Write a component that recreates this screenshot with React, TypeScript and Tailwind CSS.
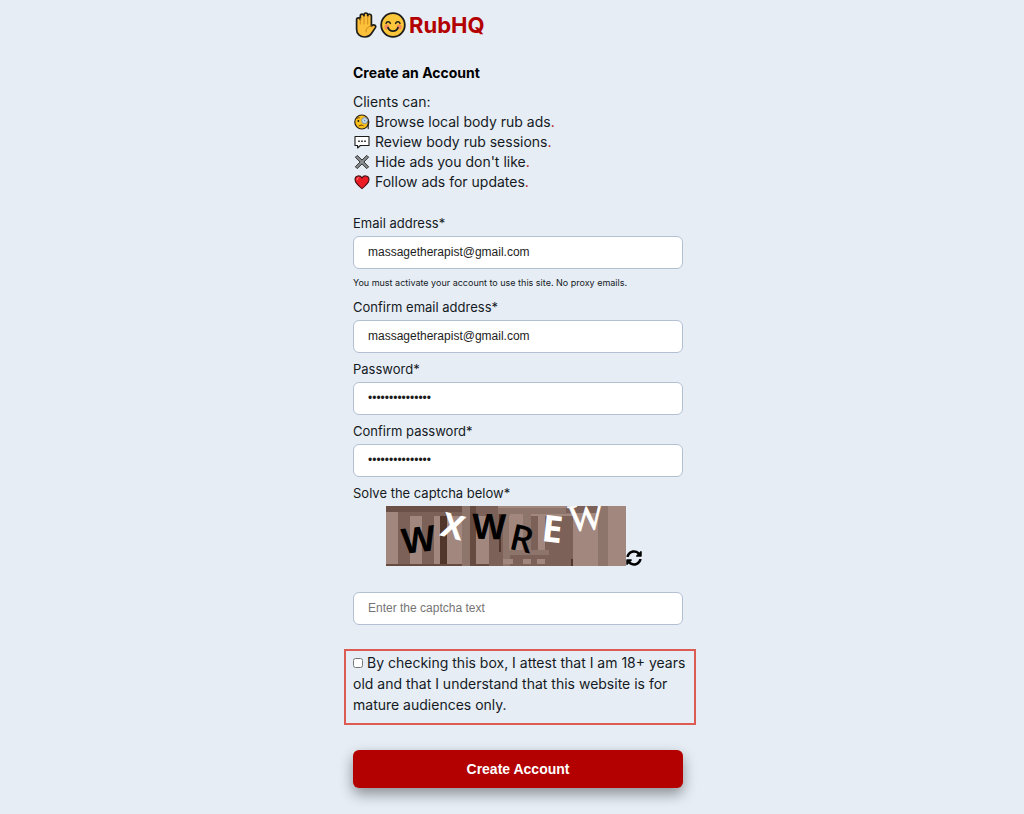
import React, { useState, ChangeEvent, FormEvent } from "react";
import { FaSyncAlt } from "react-icons/fa";

interface Field {
  name: "email" | "confirmEmail" | "password" | "confirmPassword";
  label: string;
  type: string;
  hint?: string;
}

interface Perk {
  icon: React.ReactNode;
  text: string;
}

const HandIcon = () => (
  <svg viewBox="0 0 22 26" className="w-[22px] h-[26px]" aria-hidden="true">
    <path
      d="M1.600 7.600c0-2.400 3.500-2.400 3.700 0V4c0-2.400 3.500-2.400 3.700 0V2.800c0-2.400 3.700-2.400 3.700 0V4c0-2.400 3.700-2.400 3.700.2v10l1-.9c1.600-1.300 4 .5 3 2.300l-4.100 6.200c-1.500 2.200-3.600 3.200-6.400 3.200-5 0-8.300-3-8.300-7.700z"
      fill="#fcc03a"
      stroke="#1d1d1b"
      strokeWidth="1.700"
      strokeLinejoin="round"
    />
    <path
      d="M5.300 6.500V12M9 4.500V12M12.700 4.500V12M16.300 14.200c-3.800.3-5.800 2.600-5.200 5.800"
      fill="none"
      stroke="#d08a1c"
      strokeWidth="1"
      strokeLinecap="round"
    />
  </svg>
);

const SmileIcon = () => (
  <svg viewBox="0 0 26 26" className="w-[26px] h-[26px]" aria-hidden="true">
    <circle cx="13" cy="13" r="11.8" fill="#fcc63a" stroke="#1d1d1b" strokeWidth="1.8" />
    <circle cx="6.8" cy="15" r="2.5" fill="#f58a5b" />
    <circle cx="19.2" cy="15" r="2.5" fill="#f58a5b" />
    <path
      d="M6 11.4c.7-2.3 3.6-2.3 4.4 0M15.6 11.4c.8-2.3 3.7-2.3 4.4 0"
      fill="none"
      stroke="#1d1d1b"
      strokeWidth="1.5"
      strokeLinecap="round"
    />
    <path
      d="M8 15.6c1.8 4.6 8.2 4.6 10 0"
      fill="none"
      stroke="#1d1d1b"
      strokeWidth="1.7"
      strokeLinecap="round"
    />
  </svg>
);

const MonocleIcon = () => (
  <svg viewBox="0 0 16 16" className="w-4 h-4" aria-hidden="true">
    <circle cx="7.8" cy="8" r="7" fill="#fcc21b" stroke="#2a2118" strokeWidth="1.2" />
    <circle cx="4.4" cy="7" r="1" fill="#2a2118" />
    <circle cx="10.6" cy="6.6" r="3" fill="#c5dcf2" stroke="#7d8fa3" strokeWidth="1" />
    <circle cx="10.6" cy="6.6" r=".8" fill="#6d87a8" />
    <path d="M14.200 7.500v7.100" stroke="#2a2118" strokeWidth="1.1" strokeLinecap="round" />
    <path
      d="M5 11.9c1.3-1 3-1 4.2-.3M2.7 4.6c.7-.9 1.7-1.1 2.6-.8"
      fill="none"
      stroke="#5f3b12"
      strokeWidth="1"
      strokeLinecap="round"
    />
  </svg>
);

const SpeechIcon = () => (
  <svg viewBox="0 0 16 16" className="w-4 h-4" aria-hidden="true">
    <path
      d="M1 2.5h14v9H6.4L3.6 14v-2.5H1z"
      fill="#fff"
      stroke="#1d1d1b"
      strokeWidth="1.1"
      strokeLinejoin="round"
    />
    <path d="M4.2 6.4h1.6v1.6H4.2zM7.2 6.4h1.6v1.6H7.2zM10.2 6.4h1.6v1.6h-1.6z" fill="#1d1d1b" />
  </svg>
);

const CrossIcon = () => (
  <svg viewBox="0 0 16 16" className="w-4 h-4" aria-hidden="true">
    <path
      d="M3.200 1.400L8 6.100l4.800-4.700 1.800 1.800L9.900 8l4.700 4.800-1.800 1.800L8 9.900l-4.800 4.700-1.800-1.800L6.100 8 1.400 3.200z"
      fill="#8b8f92"
      stroke="#2b2b2b"
      strokeWidth="1"
      strokeLinejoin="round"
    />
  </svg>
);

const HeartIcon = () => (
  <svg viewBox="0 0 16 16" className="w-4 h-4" aria-hidden="true">
    <path
      d="M8 14.6C4.5 11.9 1 9.2 1 5.6 1 1.4 6.3.6 8 4c1.7-3.400 7-2.600 7 1.600 0 3.600-3.500 6.300-7 9z"
      fill="#ec1c24"
      stroke="#4a1114"
      strokeWidth="1.1"
      strokeLinejoin="round"
    />
    <path d="M3.2 5.6c0-1 .5-1.7 1.4-2" fill="none" stroke="#ff8d8d" strokeWidth="1" strokeLinecap="round" />
  </svg>
);

const CaptchaImage = () => (
  <svg viewBox="0 0 240 60" className="w-60 h-15 overflow-hidden" role="img" aria-label="Captcha">
    <rect width="240" height="60" fill="#a1877e" />
    <path d="M0 0h84v6H0z" fill="#6a5046" />
    <path d="M12 6h12v52H12zM36 6h12v52H36zM24 6h12v4H24zM48 6h28v4H48z" fill="#7b6157" />
    <path d="M54 10h7v48h-7z" fill="#51362c" />
    <path d="M0 58h104v2H0z" fill="#664b41" />
    <path d="M76 0h8v60h-8z" fill="#8e756c" />
    <path d="M84 0h6v60h-6z" fill="#664b41" />
    <path d="M90 0h24v10H90z" fill="#7b6157" />
    <path d="M103 10h84v50h-84z" fill="#7b6157" />
    <path d="M113 6h2v40h-2z" fill="#51362c" />
    <path d="M112 0h75v2h-75z" fill="#a1877e" />
    <path d="M112 2h75v6h-75z" fill="#8e756c" />
    <path d="M117 8h7v52h-7zM137 8h8v38h-8zM123 44h40v5h-40z" fill="#8e756c" />
    <path d="M123 10h14v34h-14zM152 10h7v34h-7zM117 53h10v5h-10zM137 53h8v5h-8zM151 53h8v5h-8z" fill="#a1877e" />
    <path d="M180 0h32v7h-32z" fill="#7b6157" />
    <path d="M185 53h2v7h-2z" fill="#51362c" />
    <path d="M212 0h10v60h-10z" fill="#8e756c" />
    <g textAnchor="middle" className="font-['Open_Sans',sans-serif] font-bold">
      <text transform="translate(34 46) rotate(-7)" fontSize="35">W</text>
      <text transform="translate(64 32) rotate(14)" fontSize="34" fill="#fff">X</text>
      <text transform="translate(103 33) rotate(1)" fontSize="35">W</text>
      <text transform="translate(133 45) rotate(13)" fontSize="36" className="font-semibold">R</text>
      <text transform="translate(165 36) rotate(6)" fontSize="37" fill="#fff">E</text>
    </g>
    <text
      transform="translate(201 24) rotate(-5)"
      fontSize="38"
      textAnchor="middle"
      fill="#fff"
      stroke="#fff"
      strokeWidth=".6"
      className="font-['Liberation_Serif',serif]"
    >
      W
    </text>
  </svg>
);

const perks: Perk[] = [
  { icon: <MonocleIcon />, text: "Browse local body rub ads" },
  { icon: <SpeechIcon />, text: "Review body rub sessions" },
  { icon: <CrossIcon />, text: "Hide ads you don't like" },
  { icon: <HeartIcon />, text: "Follow ads for updates" },
];

const fields: Field[] = [
  {
    name: "email",
    label: "Email address*",
    type: "email",
    hint: "You must activate your account to use this site. No proxy emails.",
  },
  { name: "confirmEmail", label: "Confirm email address*", type: "email" },
  { name: "password", label: "Password*", type: "password" },
  { name: "confirmPassword", label: "Confirm password*", type: "password" },
];

const inputClass =
  "block w-full h-[33px] px-[14px] pb-[2px] rounded-md border border-[#b3c0d3] bg-white font-['Liberation_Sans',sans-serif] text-xs text-[#1c1c1c] placeholder:text-[#757575] focus:outline-none focus:ring-2 focus:ring-[#b3c0d3]";

const App: React.FC = () => {
  const [form, setForm] = useState({
    email: "massagetherapist@gmail.com",
    confirmEmail: "massagetherapist@gmail.com",
    password: "relaxingmassage",
    confirmPassword: "relaxingmassage",
    captcha: "",
  });
  const [isAdult, setIsAdult] = useState(false);

  const handleChange = (e: ChangeEvent<HTMLInputElement>) => {
    const { name, value } = e.target;
    setForm({ ...form, [name]: value });
  };

  const handleSubmit = (e: FormEvent<HTMLFormElement>) => {
    e.preventDefault();
  };

  return (
    <div className="min-h-screen bg-[#e6edf5] pl-3 pt-3 pb-6 font-['Inter',sans-serif] text-sm text-[#151a1e]">
      <main className="w-full max-w-[330px] mx-auto">
        <header>
          <a href="#" className="inline-flex items-center gap-[3px] align-top pl-[2px]">
            <HandIcon />
            <SmileIcon />
            <span className="text-[22px] leading-[26px] font-bold text-[#b30000]">RubHQ</span>
          </a>
        </header>

        <h1 className="mt-[25px] leading-5 font-bold text-black">Create an Account</h1>

        <section className="mt-[9px] leading-5">
          <p>Clients can:</p>
          <ul>
            {perks.map((perk) => (
              <li key={perk.text} className="flex items-center gap-[5px] pl-[1px]">
                {perk.icon}
                <span>
                  {perk.text}
                  <span className="text-[#b30000]">.</span>
                </span>
              </li>
            ))}
          </ul>
        </section>

        <form onSubmit={handleSubmit} className="mt-[21px]">
          {fields.map((field) => (
            <div key={field.name} className="mb-[6px]">
              <label htmlFor={field.name} className="block mb-[3px] text-[13px] leading-5">
                {field.label}
              </label>
              <input
                id={field.name}
                name={field.name}
                type={field.type}
                value={form[field.name]}
                onChange={handleChange}
                className={inputClass}
              />
              {field.hint && <p className="mt-[6px] text-[9px] leading-4">{field.hint}</p>}
            </div>
          ))}

          {/* Captcha */}
          <label htmlFor="captcha" className="block mb-[3px] text-[13px] leading-5">
            Solve the captcha below*
          </label>
          <div className="flex items-end justify-center pr-2">
            <CaptchaImage />
            <button type="button" aria-label="Refresh captcha" className="text-black">
              <FaSyncAlt className="w-4 h-4" />
            </button>
          </div>
          <input
            id="captcha"
            name="captcha"
            type="text"
            placeholder="Enter the captcha text"
            value={form.captcha}
            onChange={handleChange}
            className={`${inputClass} mt-[26px]`}
          />

          {/* Age check */}
          <div className="-ml-[9px] -mr-[13px] mt-6 px-[7px] pt-[1px] pb-2 border-2 border-[#dc5b52]">
            <label className="block leading-[21px]">
              <input
                type="checkbox"
                checked={isAdult}
                onChange={(e) => setIsAdult(e.target.checked)}
                className="w-[10px] h-[10px] mr-1"
              />
              By checking this box, I attest that I am 18+ years old and that I understand that this
              website is for mature audiences only.
            </label>
          </div>

          <button
            type="submit"
            className="w-full h-[38px] mt-[25px] rounded-md bg-[#b30000] font-['Liberation_Sans',sans-serif] font-bold text-white shadow-[0_6px_14px_rgba(0,0,0,0.4)] hover:bg-[#990000]"
          >
            Create Account
          </button>
        </form>
      </main>
    </div>
  );
};

export default App;
